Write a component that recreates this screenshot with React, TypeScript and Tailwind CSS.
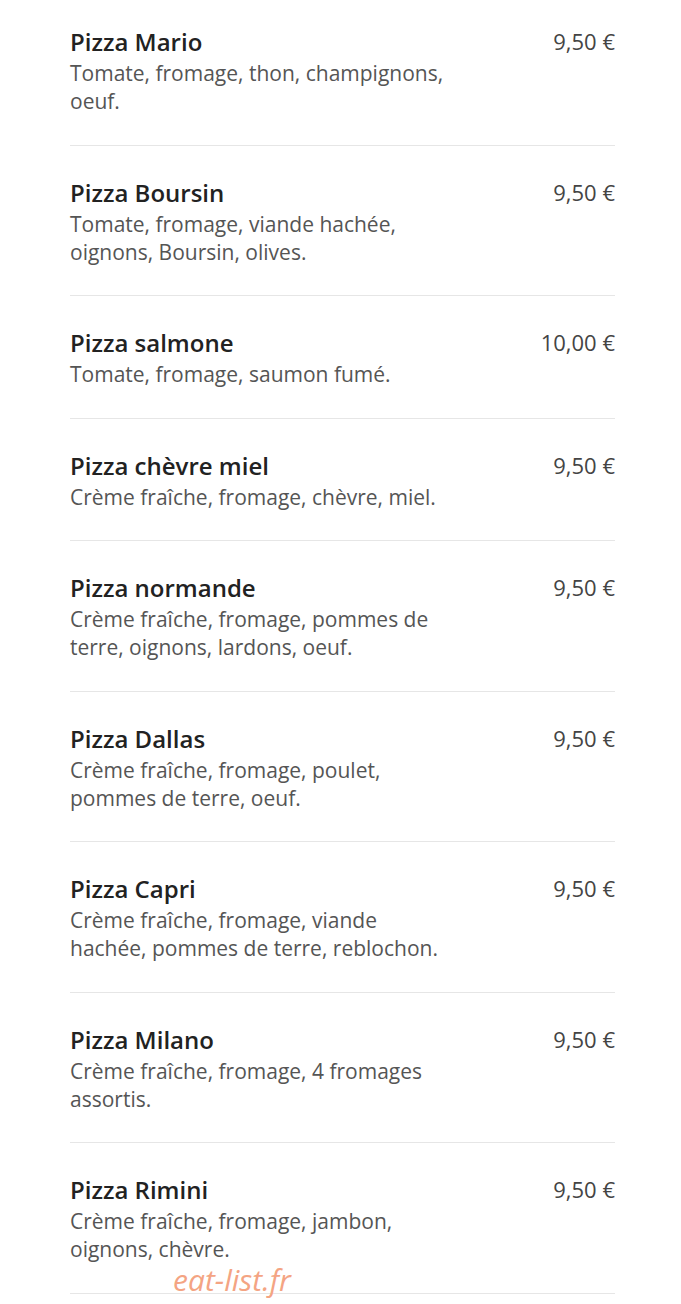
import React from 'react';

interface Pizza {
  name: string;
  desc: string;
  price: string;
}

const PIZZAS: Pizza[] = [
  { name: 'Pizza Mario', desc: 'Tomate, fromage, thon, champignons, oeuf.', price: '9,50 €' },
  { name: 'Pizza Boursin', desc: 'Tomate, fromage, viande hachée, oignons, Boursin, olives.', price: '9,50 €' },
  { name: 'Pizza salmone', desc: 'Tomate, fromage, saumon fumé.', price: '10,00 €' },
  { name: 'Pizza chèvre miel', desc: 'Crème fraîche, fromage, chèvre, miel.', price: '9,50 €' },
  { name: 'Pizza normande', desc: 'Crème fraîche, fromage, pommes de terre, oignons, lardons, oeuf.', price: '9,50 €' },
  { name: 'Pizza Dallas', desc: 'Crème fraîche, fromage, poulet, pommes de terre, oeuf.', price: '9,50 €' },
  { name: 'Pizza Capri', desc: 'Crème fraîche, fromage, viande hachée, pommes de terre, reblochon.', price: '9,50 €' },
  { name: 'Pizza Milano', desc: 'Crème fraîche, fromage, 4 fromages assortis.', price: '9,50 €' },
  { name: 'Pizza Rimini', desc: 'Crème fraîche, fromage, jambon, oignons, chèvre.', price: '9,50 €' },
];

export default function App() {
  return (
    <div className="relative min-h-[1304px] bg-white font-['Open_Sans',sans-serif] overflow-hidden">
      <div className="ml-[70px] w-[545px]">
        {PIZZAS.map((p, i) => (
          <div
            key={p.name}
            className={`flex justify-between border-b border-[#e6e6e6] pb-[29.5px] ${i === 0 ? 'pt-[27px]' : 'pt-[32px]'}`}
          >
            <div className="w-[380px]">
              <div className="text-[24px] leading-[30px] mb-[2px] font-semibold text-[#222]">{p.name}</div>
              <div className="text-[21px] leading-[28px] text-[#555]">{p.desc}</div>
            </div>
            <div className="text-[22px] leading-[28px] text-[#444] whitespace-nowrap">{p.price}</div>
          </div>
        ))}
      </div>

      {/* watermark */}
      <div className="absolute left-[173px] top-[1264px] text-[30px] leading-[32px] italic text-[#f4a483]">
        eat-list.fr
      </div>
    </div>
  );
}
